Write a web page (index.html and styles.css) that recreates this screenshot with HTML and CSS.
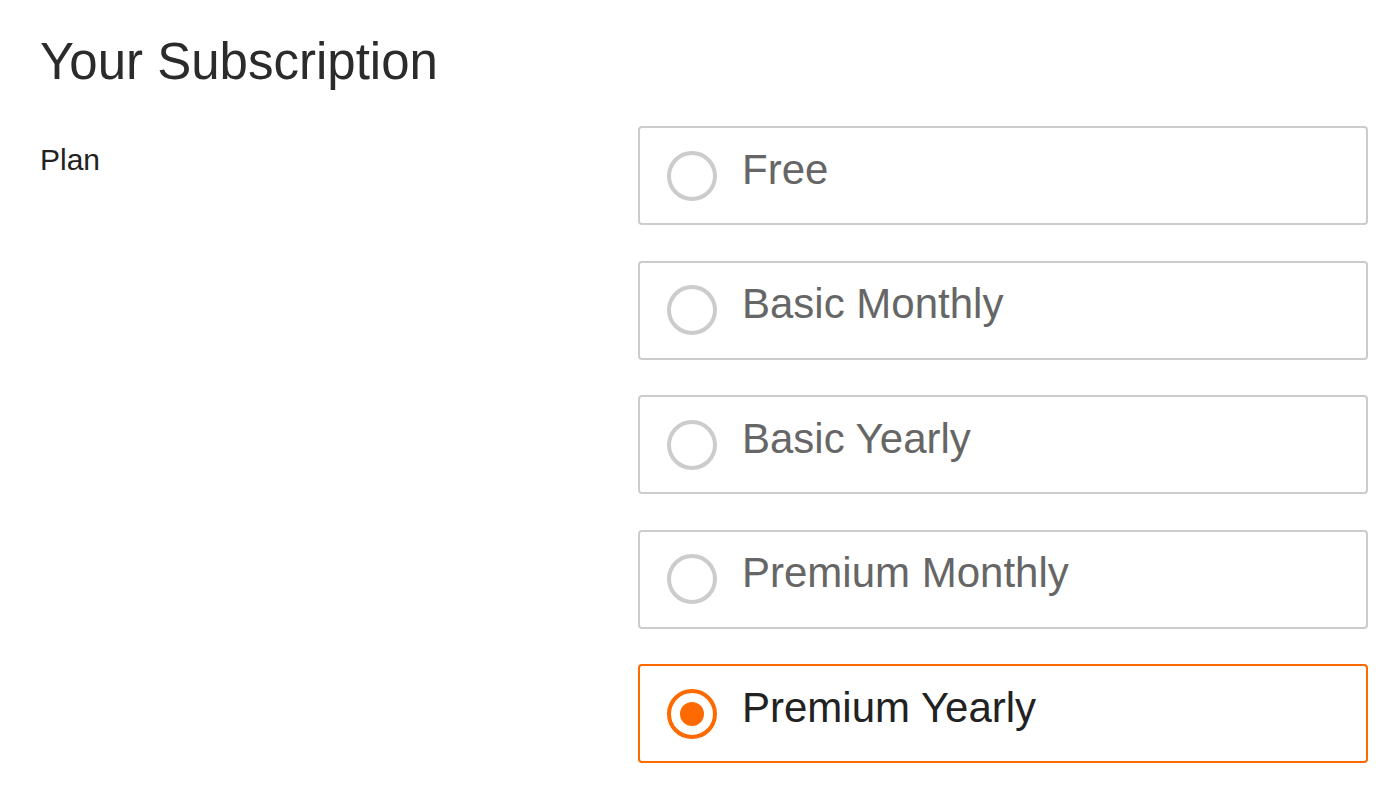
FILE: index.html
```html
<!DOCTYPE html>
<html>
<head>
<meta charset="utf-8">
<link rel="stylesheet" href="styles.css">
</head>
<body>
<div class="page">
  <h1 class="title">Your Subscription</h1>
  <div class="row">
    <div class="label">Plan</div>
    <div class="options">
      <label class="option"><span class="radio"></span><span class="text">Free</span></label>
      <label class="option"><span class="radio"></span><span class="text">Basic Monthly</span></label>
      <label class="option"><span class="radio"></span><span class="text">Basic Yearly</span></label>
      <label class="option"><span class="radio"></span><span class="text">Premium Monthly</span></label>
      <label class="option selected"><span class="radio"></span><span class="text">Premium Yearly</span></label>
    </div>
  </div>
</div>
</body>
</html>
```

FILE: styles.css
```css
html, body {
  margin: 0;
  padding: 0;
  background: #ffffff;
}
body {
  font-family: "Liberation Sans", Arial, sans-serif;
}
.page {
  padding: 0 26px 0 40px;
}
.title {
  margin: 0;
  padding-top: 29px;
  font-size: 51px;
  font-weight: 400;
  line-height: 66px;
  color: #2b2b2b;
}
.row {
  display: grid;
  grid-template-columns: 598px 1fr;
  margin-top: 31px;
}
.label {
  font-size: 30px;
  line-height: 34px;
  color: #222;
  padding-top: 17px;
}
.options {
  display: flex;
  flex-direction: column;
  gap: 35.5px;
}
.option {
  display: flex;
  align-items: center;
  height: 99px;
  box-sizing: border-box;
  border: 2px solid #cccccc;
  border-radius: 4px;
  padding-left: 27px;
}
.radio {
  width: 50px;
  height: 50px;
  box-sizing: border-box;
  border: 4px solid #cccccc;
  border-radius: 50%;
  flex: none;
  display: flex;
  align-items: center;
  justify-content: center;
}
.text {
  margin-left: 25px;
  font-size: 42px;
  line-height: 46px;
  color: #666666;
  padding-bottom: 12px;
}
.option.selected {
  border-color: #ff6a00;
}
.option.selected .radio {
  border-color: #ff6a00;
}
.option.selected .radio::after {
  content: "";
  width: 24px;
  height: 24px;
  border-radius: 50%;
  background: #ff6a00;
}
.option.selected .text {
  color: #222222;
}
```
